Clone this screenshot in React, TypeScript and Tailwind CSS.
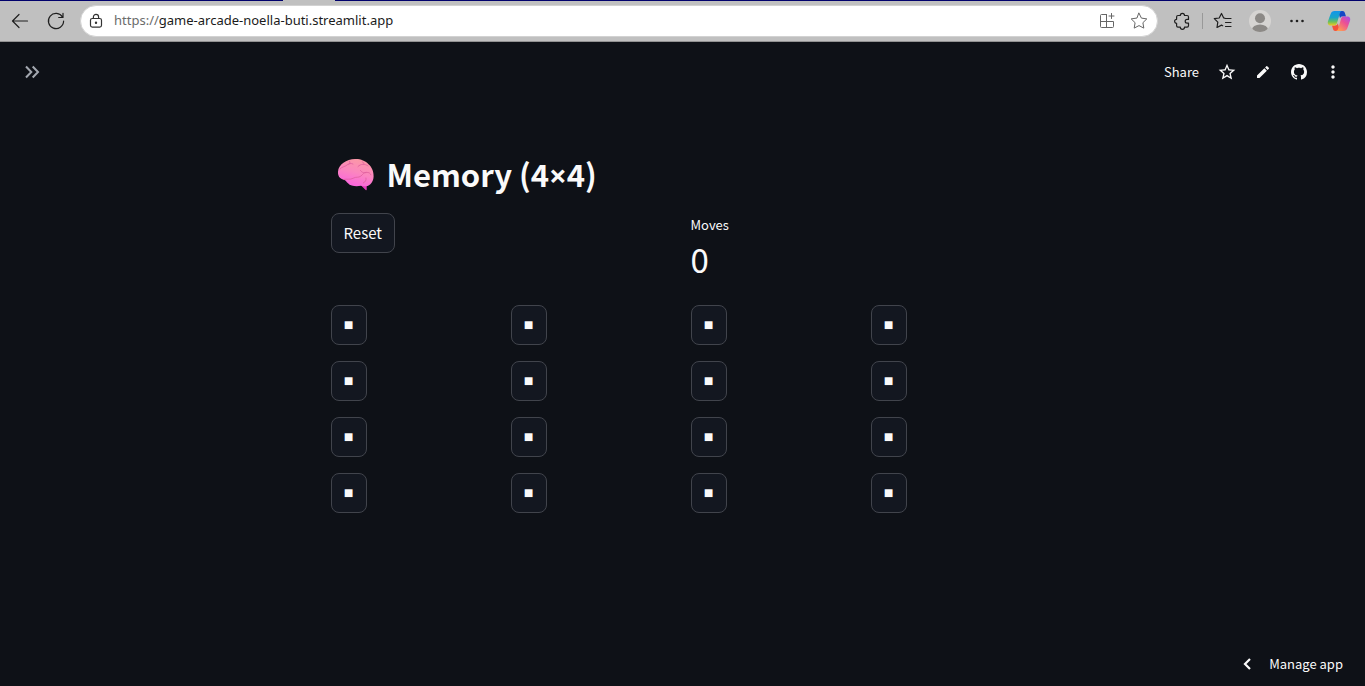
import { useState } from "react";
import { MdEdit, MdMoreVert, MdStarBorder } from "react-icons/md";

const line = {
  fill: "none",
  stroke: "currentColor",
  strokeLinecap: "round",
  strokeLinejoin: "round",
} as const;

function BackIcon() {
  return (
    <svg width="20" height="20" viewBox="0 0 20 20" {...line} strokeWidth="1.2">
      <path d="M17.5 10H2.5M9 3.5L2.5 10 9 16.5" />
    </svg>
  );
}

function ReloadIcon() {
  return (
    <svg width="20" height="20" viewBox="0 0 20 20" {...line} strokeWidth="1.2">
      <path d="M16.6 6.2A7.6 7.6 0 1 0 17.6 10M17 2.3v4.2h-4.3" />
    </svg>
  );
}

function LockIcon() {
  return (
    <svg width="16" height="16" viewBox="0 0 16 16" {...line} strokeWidth="1.2">
      <rect x="2.5" y="5.5" width="11" height="8.6" rx="1.8" />
      <path d="M5.4 5.4V4a2.6 2.6 0 0 1 5.2 0v1.4" />
      <circle cx="8" cy="9.8" r=".6" fill="currentColor" />
    </svg>
  );
}

function AppsIcon() {
  return (
    <svg width="20" height="20" viewBox="0 0 20 20" {...line} strokeWidth="1">
      <path d="M9.5 3.5h-5a1 1 0 0 0-1 1v11a1 1 0 0 0 1 1h11a1 1 0 0 0 1-1v-5h-13M9.5 3.5v13M14.5 2.5v5M12 5h5" />
    </svg>
  );
}

function StarIcon() {
  return (
    <svg width="20" height="20" viewBox="0 0 20 20" {...line} strokeWidth="1">
      <path d="M10 2.2l2.4 4.9 5.4.8-3.9 3.8.9 5.4-4.8-2.5-4.8 2.5.9-5.4-3.9-3.8 5.4-.8z" />
    </svg>
  );
}

function PuzzleIcon() {
  return (
    <svg width="20" height="20" viewBox="0 0 20 20" {...line} strokeWidth="1.2">
      <path d="M6 4.5h2.3a2.1 2.1 0 0 1 4.2 0h2.6a1.4 1.4 0 0 1 1.4 1.4v2.5h-1.4a1.9 1.9 0 0 0 0 3.8h1.4v2.6a1.4 1.4 0 0 1-1.4 1.4h-2.6a2.1 2.1 0 0 1-4.2 0H6a1.4 1.4 0 0 1-1.4-1.4v-2.5a2 2 0 0 1 0-4V5.9A1.4 1.4 0 0 1 6 4.5z" />
    </svg>
  );
}

function FavoritesIcon() {
  return (
    <svg width="20" height="20" viewBox="0 0 20 20" {...line} strokeWidth="1.2">
      <path d="M12.5 7.5H18M12.5 11.5H18M12.5 15.5H18M12.5 7.500l-1.800-.6L8.500 2.500 6.200 7l-4.900.7 3.500 3.500-.8 5.300 4.500-2.400 1.200.6" />
    </svg>
  );
}

function AvatarIcon() {
  return (
    <svg width="22" height="22" viewBox="0 0 22 22">
      <clipPath id="avatar-clip">
        <circle cx="11" cy="11" r="11" />
      </clipPath>
      <g clipPath="url(#avatar-clip)">
        <rect width="22" height="22" fill="#d6d4d2" />
        <circle cx="11" cy="8.2" r="5" fill="#8c8986" />
        <ellipse cx="11" cy="19.6" rx="8" ry="5.2" fill="#8c8986" />
      </g>
    </svg>
  );
}

function CopilotIcon() {
  return (
    <svg width="24" height="22" viewBox="0 0 24 22">
      <defs>
        <linearGradient id="cp-blue" x1="0" y1="0" x2="0" y2="1">
          <stop offset="0" stopColor="#1295ea" />
          <stop offset=".45" stopColor="#18a5c9" />
          <stop offset=".75" stopColor="#6fc05a" />
          <stop offset="1" stopColor="#f0cc20" />
        </linearGradient>
        <linearGradient id="cp-pink" x1="1" y1="0" x2="0.2" y2="1">
          <stop offset="0" stopColor="#a052ee" />
          <stop offset=".45" stopColor="#ec4f95" />
          <stop offset="1" stopColor="#ffa04f" />
        </linearGradient>
      </defs>
      <path d="M11 1h4.5c1.4 0 2 .8 2.4 2.1L19 6.5h-3c-1.6 0-2.6.3-3 1.8z" fill="#1547c5" />
      <path d="M13 21H8.4c-1.5 0-2-.7-2.4-2L5 15.5h3c1.6 0 2.4-.8 2.8-2.2z" fill="#f4513c" />
      <path d="M7.5 1H15c-1.3.2-1.8 1.2-2.2 2.5L10 13c-.5 1.7-1.3 2.5-3 2.5H4c-2.9 0-3.7-2-3-4.300L3.600 4C4.200 2 5.500 1 7.500 1z" fill="url(#cp-blue)" />
      <path d="M16.5 21H9c1.4-.2 1.8-1.1 2.2-2.4L14 9c.5-1.9 1.4-2.5 3-2.5h3c2.9 0 3.7 2 3 4.3L20.4 18c-.6 2-1.9 3-3.9 3z" fill="url(#cp-pink)" />
    </svg>
  );
}

function GithubIcon() {
  return (
    <svg width="16" height="16" viewBox="0 0 16 16" fill="currentColor">
      <path d="M8 0C3.58 0 0 3.58 0 8c0 3.54 2.29 6.53 5.47 7.59.4.07.55-.17.55-.38 0-.19-.01-.82-.01-1.49-2.01.37-2.53-.49-2.69-.94-.09-.23-.48-.94-.82-1.13-.28-.15-.68-.52-.01-.53.63-.01 1.08.58 1.23.82.72 1.21 1.87.87 2.33.66.07-.52.28-.87.51-1.07-1.78-.2-3.64-.89-3.64-3.95 0-.87.31-1.59.82-2.15-.08-.2-.36-1.02.08-2.12 0 0 .67-.21 2.2.82.64-.18 1.32-.27 2-.27s1.36.09 2 .27c1.53-1.04 2.2-.82 2.2-.82.44 1.1.16 1.92.08 2.12.51.56.82 1.27.82 2.15 0 3.07-1.87 3.75-3.65 3.95.29.25.54.73.54 1.48 0 1.07-.01 1.93-.01 2.2 0 .21.15.46.55.38A8.01 8.01 0 0 0 16 8c0-4.42-3.58-8-8-8z" />
    </svg>
  );
}

function ExpandIcon() {
  return (
    <svg width="20" height="20" viewBox="0 0 20 20" fill="none" stroke="currentColor" strokeWidth="2">
      <path d="M4 4.500L9.300 10 4 15.500M10.700 4.500L16 10l-5.300 5.500" />
    </svg>
  );
}

function CollapseIcon() {
  return (
    <svg width="20" height="20" viewBox="0 0 20 20" fill="none" stroke="currentColor" strokeWidth="2.2">
      <path d="M13 5l-5 5 5 5" />
    </svg>
  );
}

function BrainIcon() {
  return (
    <svg width="38" height="34" viewBox="0 0 38 34" aria-hidden="true">
      <defs>
        <linearGradient id="brain-fill" x1=".7" y1="0" x2=".35" y2="1">
          <stop offset="0" stopColor="#fb9aa4" />
          <stop offset=".5" stopColor="#fb86bf" />
          <stop offset="1" stopColor="#fb62e0" />
        </linearGradient>
      </defs>
      <path d="M23.5 28l5.2 5c.5.400 1 .2 1-.4v-6z" fill="#e53bbd" />
      <path
        d="M18 2C23 1.700 28.600 3.700 31.500 7.200c3.300 2.600 5.200 7.200 5.100 12.200-.1 4.800-3.100 9.200-7.600 9.800-2 .3-3.500-.3-5-.4-4.500.9-10.500.5-13-2.600-1.700-1.400-2.300-3.200-4.500-3.800C2.700 21.900.7 18.800 1 14.700 1.400 7.300 9.500 2.400 18 2z"
        fill="url(#brain-fill)"
      />
      <g {...line} stroke="#e0609f" strokeWidth="1" opacity=".8">
        <path d="M3 12c2.200-2.600 5-2.200 7-4 1.700-1.500 4.300-2 6-1M12.500 4.200c1 1 .6 2.800-.8 3.400M21 9.500c3-3 7-2.800 10-.6M25 4.500c1.300.8 2 1.700 2 2.900M6.500 22.500c4-1 6.500.5 9.500-1.200 3.300-1.900 5.200-.2 8-2.300 2-1.500 2.500-3.700 5.300-3.800M23.500 13.500c1.500 2.500 4 2.500 6.200 2 1.800-.4 3.600.5 4.200 2.300M29 21c.4 2.200-.6 4-2.600 4.900" />
      </g>
    </svg>
  );
}

function BrowserBar() {
  const [url, setUrl] = useState("game-arcade-noella-buti.streamlit.app");
  return (
    <div className="border-b border-[#929292] bg-[#c0c0c0] text-[#1f1f1f]">
      <div className="flex h-px">
        <div className="w-[283px] bg-[#00006c]" />
        <div className="w-[52px]" />
        <div className="grow bg-[#00006c]" />
      </div>
      <nav aria-label="Browser" className="flex h-10 items-center pr-3.5 pl-2.5">
        <button aria-label="Back" className="mr-4">
          <BackIcon />
        </button>
        <button aria-label="Reload">
          <ReloadIcon />
        </button>
        <div className="ml-3.5 flex h-8 grow items-center rounded-full border border-[#d2d2d2] bg-white pr-2 pl-[7px] font-['Noto_Sans',sans-serif] text-[13px]">
          <button aria-label="Site information" className="mr-2.5 text-[#333]">
            <LockIcon />
          </button>
          <label htmlFor="address" className="text-[#6b6b6b]">
            https://
          </label>
          <input
            id="address"
            aria-label="Address"
            value={url}
            onChange={(e) => setUrl(e.target.value)}
            className="min-w-0 grow bg-transparent text-[#1b1b1b] outline-none"
          />
          <div className="flex items-center gap-3 text-[#666]">
            <button aria-label="Install app">
              <AppsIcon />
            </button>
            <button aria-label="Add to favorites">
              <StarIcon />
            </button>
          </div>
        </div>
        <button aria-label="Extensions" className="ml-3.5">
          <PuzzleIcon />
        </button>
        <div className="mx-2.5 h-4 w-px bg-[#999]" />
        <button aria-label="Favorites">
          <FavoritesIcon />
        </button>
        <button aria-label="Profile" className="ml-4">
          <AvatarIcon />
        </button>
        <button aria-label="Settings and more" className="ml-4">
          <svg width="20" height="20" viewBox="0 0 20 20" fill="currentColor">
            <circle cx="4.500" cy="10" r="1.300" />
            <circle cx="10" cy="10" r="1.300" />
            <circle cx="15.500" cy="10" r="1.300" />
          </svg>
        </button>
        <button aria-label="Copilot" className="ml-5">
          <CopilotIcon />
        </button>
      </nav>
    </div>
  );
}

function AppHeader() {
  return (
    <header className="flex h-15 items-center justify-between px-5.5">
      <button aria-label="Open sidebar" className="text-[#a3a8b0]">
        <ExpandIcon />
      </button>
      <div className="flex items-center">
        <button className="text-[13px]">Share</button>
        <button aria-label="Star" className="ml-4.5">
          <MdStarBorder size={20} />
        </button>
        <button aria-label="Edit" className="ml-4.5">
          <MdEdit size={16} />
        </button>
        <a href="#source" aria-label="View source" className="ml-5">
          <GithubIcon />
        </a>
        <button aria-label="Main menu" className="ml-4">
          <MdMoreVert size={20} />
        </button>
      </div>
    </header>
  );
}

const boxed =
  "h-10 min-w-9 rounded-lg border border-[#41444c] bg-[#131720] px-3";

export default function App() {
  const [moves, setMoves] = useState(0);
  return (
    <div className="flex min-h-screen flex-col bg-[#0e1117] font-['Noto_Sans_CJK_SC',sans-serif] text-[#fafafa]">
      <BrowserBar />
      <AppHeader />
      <main className="mx-auto w-full max-w-[704px] grow pt-12">
        <h1 className="flex h-12 items-center gap-3 pl-1.5 text-[31px] leading-12 font-bold">
          <BrainIcon />
          <span>
            Memory (4<span className="font-['Open_Sans',sans-serif]">×</span>4)
          </span>
        </h1>
        <div className="mt-[15px] grid grid-cols-2 gap-4">
          <div>
            <button onClick={() => setMoves(0)} className={`${boxed} text-[15px]`}>
              Reset
            </button>
          </div>
          <dl>
            <dt className="text-[13px] leading-6">Moves</dt>
            <dd className="text-[33px] leading-11">{moves}</dd>
          </dl>
        </div>
        <div className="mt-6 grid grid-cols-4 gap-4">
          {Array.from({ length: 16 }, (_, i) => (
            <div key={i} className="h-10">
              <button
                aria-label={`Card ${i + 1}`}
                onClick={() => setMoves(moves + 1)}
                className={`${boxed} font-['Liberation_Sans',sans-serif] text-base`}
              >
                ■
              </button>
            </div>
          ))}
        </div>
      </main>
      <footer className="flex h-11 items-center justify-end pr-5.5">
        <button className="flex items-center gap-3 text-[13px]">
          <CollapseIcon />
          Manage app
        </button>
      </footer>
    </div>
  );
}
